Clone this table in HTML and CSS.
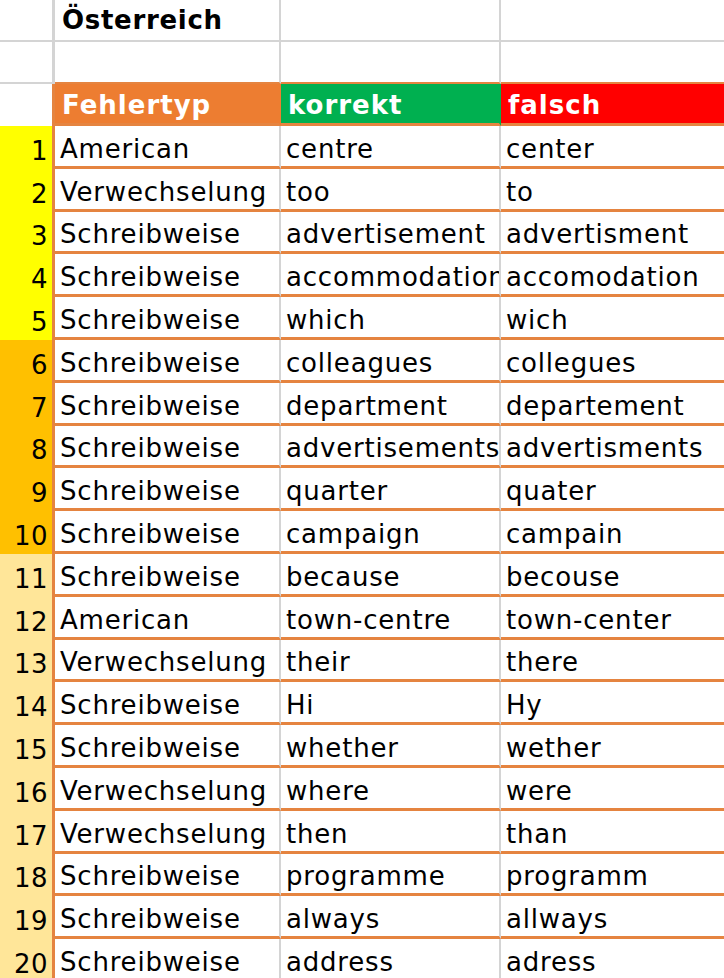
FILE: index.html
```html
<!DOCTYPE html>
<html lang="de">
<head>
<meta charset="utf-8">
<title>Österreich</title>
<link rel="stylesheet" href="styles.css">
</head>
<body>
<div class="sheet">
  <div class="c a top"></div><div class="c b top title">Österreich</div><div class="c top"></div><div class="c d top"></div>
  <div class="c a top"></div><div class="c b top pre"></div><div class="c top pre"></div><div class="c d top pre"></div>
  <div class="c a hd-a"></div><div class="c b hd orange">Fehlertyp</div><div class="c hd green">korrekt</div><div class="c d hd red">falsch</div>

  <div class="c a n y">1</div><div class="c b r">American</div><div class="c r">centre</div><div class="c d r">center</div>
  <div class="c a n y">2</div><div class="c b r">Verwechselung</div><div class="c r">too</div><div class="c d r">to</div>
  <div class="c a n y">3</div><div class="c b r">Schreibweise</div><div class="c r">advertisement</div><div class="c d r">advertisment</div>
  <div class="c a n y">4</div><div class="c b r">Schreibweise</div><div class="c r">accommodation</div><div class="c d r">accomodation</div>
  <div class="c a n y">5</div><div class="c b r">Schreibweise</div><div class="c r">which</div><div class="c d r">wich</div>
  <div class="c a n o">6</div><div class="c b r">Schreibweise</div><div class="c r">colleagues</div><div class="c d r">collegues</div>
  <div class="c a n o">7</div><div class="c b r">Schreibweise</div><div class="c r">department</div><div class="c d r">departement</div>
  <div class="c a n o">8</div><div class="c b r">Schreibweise</div><div class="c r">advertisements</div><div class="c d r">advertisments</div>
  <div class="c a n o">9</div><div class="c b r">Schreibweise</div><div class="c r">quarter</div><div class="c d r">quater</div>
  <div class="c a n o">10</div><div class="c b r">Schreibweise</div><div class="c r">campaign</div><div class="c d r">campain</div>
  <div class="c a n l">11</div><div class="c b r">Schreibweise</div><div class="c r">because</div><div class="c d r">becouse</div>
  <div class="c a n l">12</div><div class="c b r">American</div><div class="c r">town-centre</div><div class="c d r">town-center</div>
  <div class="c a n l">13</div><div class="c b r">Verwechselung</div><div class="c r">their</div><div class="c d r">there</div>
  <div class="c a n l">14</div><div class="c b r">Schreibweise</div><div class="c r">Hi</div><div class="c d r">Hy</div>
  <div class="c a n l">15</div><div class="c b r">Schreibweise</div><div class="c r">whether</div><div class="c d r">wether</div>
  <div class="c a n l">16</div><div class="c b r">Verwechselung</div><div class="c r">where</div><div class="c d r">were</div>
  <div class="c a n l">17</div><div class="c b r">Verwechselung</div><div class="c r">then</div><div class="c d r">than</div>
  <div class="c a n l">18</div><div class="c b r">Schreibweise</div><div class="c r">programme</div><div class="c d r">programm</div>
  <div class="c a n l">19</div><div class="c b r">Schreibweise</div><div class="c r">always</div><div class="c d r">allways</div>
  <div class="c a n l">20</div><div class="c b r">Schreibweise</div><div class="c r">address</div><div class="c d r">adress</div>
</div>
</body>
</html>
```
FILE: styles.css
```css
html, body {
  margin: 0;
  padding: 0;
  background: #ffffff;
}
body {
  width: 724px;
  height: 978px;
  overflow: hidden;
  font-family: "DejaVu Sans", Verdana, sans-serif;
  color: #000;
}
.sheet {
  display: grid;
  grid-template-columns: 55px 226px 220px 223px;
  grid-auto-rows: auto;
}
.c {
  box-sizing: border-box;
  border-right: 2px solid #d4d4d4;
  border-bottom: 2px solid #d4d4d4;
  white-space: nowrap;
  overflow: hidden;
  display: flex;
  align-items: flex-end;
  font-size: 26px;
  letter-spacing: 0.8px;
  padding: 0 0 3px 5px;
}
.c.d { border-right: 0; }
.c.a {
  border-right-width: 3px;
  padding: 0 4px 3px 0;
  justify-content: flex-end;
  letter-spacing: 0.4px;
}
.top { height: 42px; }
.title {
  font-weight: bold;
  font-size: 26px;
  letter-spacing: 0.7px;
  padding: 0 0 5px 7px;
}
.pre { border-bottom-color: #e58440; }
.hd-a {
  height: 42px;
  border-bottom: 0;
  border-right-color: #e58440;
}
.hd {
  height: 42px;
  border-bottom: 3px solid #e58440;
  border-right-color: transparent;
  color: #fff;
  font-weight: bold;
  font-size: 26px;
  letter-spacing: 1px;
  padding: 0 0 3px 7px;
}
.orange { background: #ed7d31; }
.green { background: #00b050; }
.red { background: #ff0000; }
.n {
  height: 42.8px;
  border-bottom: 0;
  border-right-color: #e58440;
}
.y { background: #ffff00; }
.o { background: #ffc000; }
.l { background: #ffe699; }
.r {
  height: 42.8px;
  border-bottom: 3px solid #e58440;
  padding-bottom: 2px;
}
```
